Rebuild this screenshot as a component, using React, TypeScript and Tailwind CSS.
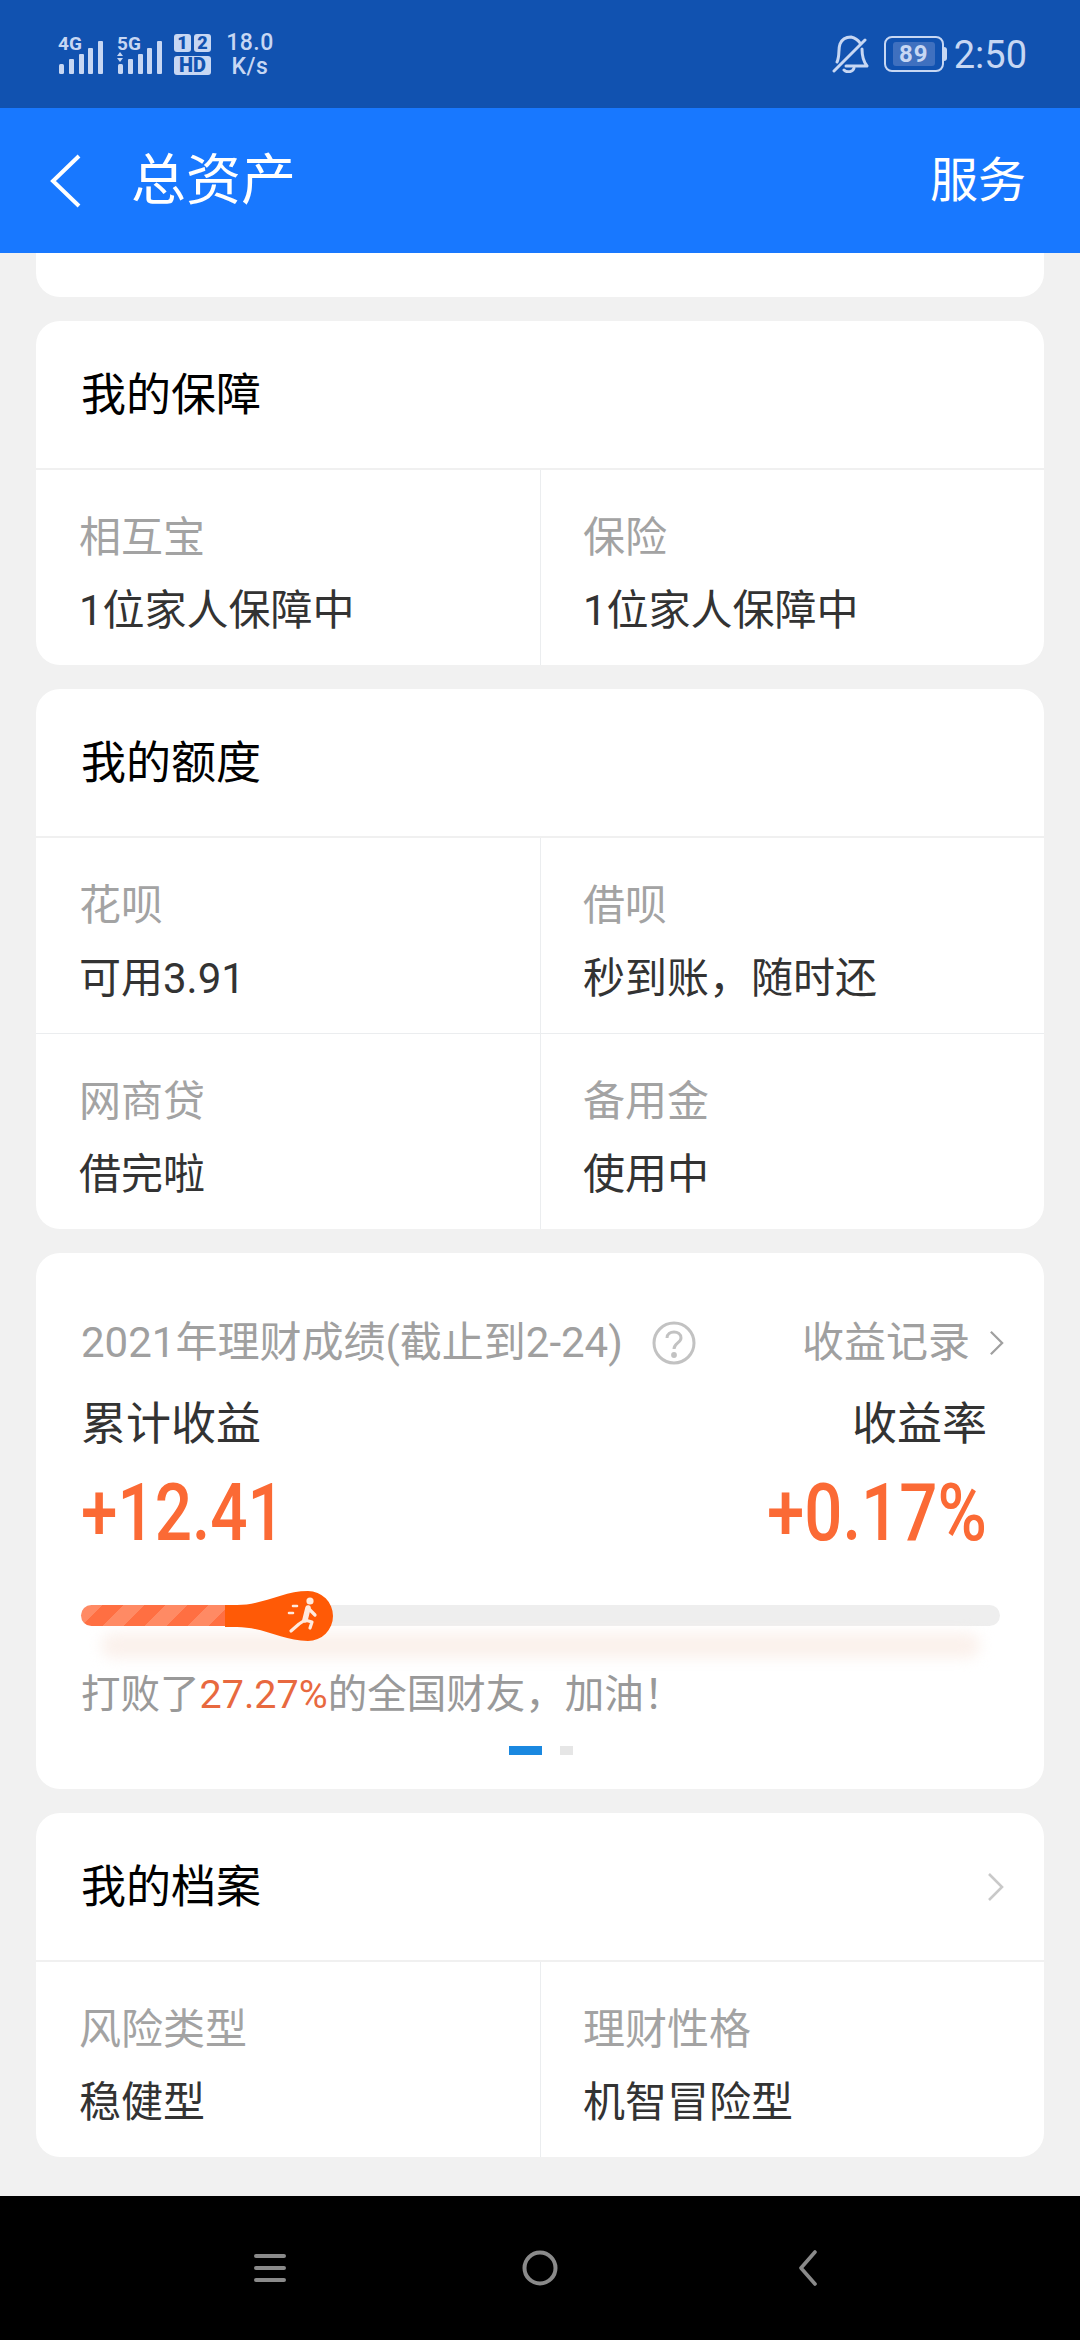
const font = "font-['Roboto','Noto_Sans_CJK_SC',sans-serif]";

function Cell({ label, value, first }: { label: string; value: string; first?: boolean }) {
  return (
    <div className={first ? "w-[505px] border-r border-[#ebedef] pb-[17px] pl-[43px] pt-[32px]" : "flex-1 pb-[17px] pl-[42px] pt-[32px]"}>
      <p className="h-[72px] text-[42px] leading-[72px] text-[#a3a3a3]">{label}</p>
      <p className="h-[74px] text-[42px] leading-[74px] text-[#333333]">{value}</p>
    </div>
  );
}

function CardHead({ title, arrow }: { title: string; arrow?: boolean }) {
  return (
    <div className="flex h-[149px] items-center justify-between border-b-2 border-[#f0f0f0] pl-[45px] pr-[40px]">
      <h2 className="pt-[3px] text-[45px] font-normal text-black">{title}</h2>
      {arrow && <Chevron className="h-[30px] w-[17px] stroke-[#c9c9c9]" />}
    </div>
  );
}

function Chevron({ className }: { className: string }) {
  return (
    <svg viewBox="0 0 17 30" className={className} fill="none" strokeWidth="2.6">
      <path d="M2 2 L15 15 L2 28" />
    </svg>
  );
}

function Signal({ label, arrows }: { label: string; arrows?: boolean }) {
  return (
    <div className="relative h-[41px] w-[46px]">
      <span className="absolute left-0 top-[1px] text-[19px] font-bold leading-[18px]">{label}</span>
      <svg width="46" height="41" viewBox="0 0 46 41" fill="#c7d7f3">
        {arrows && <path d="M3 18 l3 4 h-6 z M3 28 l-3 -4 h6 z" />}
        <rect x="1" y="30" width="5" height="10" rx="1.5" />
        <rect x="11" y="25" width="5" height="15" rx="1" />
        <rect x="21" y="20" width="5" height="20" rx="1" />
        <rect x="30" y="14" width="5" height="26" rx="1" />
        <rect x="40" y="7" width="5" height="33" rx="1" />
      </svg>
    </div>
  );
}

function StatusBar() {
  return (
    <div className="flex h-[108px] shrink-0 items-center justify-between bg-[#1152b0] pl-[58px] pr-[53px] text-[#c7d7f3]">
      <div className="flex items-center">
        <Signal label="4G" />
        <div className="ml-[13px]"><Signal label="5G" arrows /></div>
        <div className="ml-[11px] grid w-[37px] grid-cols-2 gap-x-[3px] gap-y-[4px] text-[#1152b0]">
          <span className="flex h-[18px] w-[17px] items-center justify-center rounded-[3px] bg-[#c7d7f3] text-[18px] font-black leading-none">1</span>
          <span className="flex h-[18px] w-[17px] items-center justify-center rounded-[3px] bg-[#c7d7f3] text-[18px] font-black leading-none">2</span>
          <span className="col-span-2 flex h-[19px] items-center justify-center rounded-[3px] bg-[#c7d7f3] text-[20px] font-black leading-none">HD</span>
        </div>
        <div className="ml-[14px] flex w-[50px] flex-col items-center pt-[2px] text-[23px] font-medium leading-[24px] tracking-[0.5px]">
          <span>18.0</span>
          <span>K/s</span>
        </div>
      </div>
      <div className="flex items-center">
        <svg width="38" height="38" viewBox="0 0 38 38" fill="none" stroke="#c7d7f3" strokeWidth="3" strokeLinecap="round" strokeLinejoin="round">
          <path d="M6 27 C9 21 7 14 9 9 C11 4 16 2 20 2 C24 3 27 5 29 8" />
          <path d="M31 14 C31 20 32 26 36 31 H15" />
          <path d="M34 5 L3 36" />
          <path d="M13 35 C16 38 22 37 23 33" />
        </svg>
        <div className="ml-[15px] flex h-[36px] w-[60px] items-center justify-center rounded-[8px] border-[2.5px] border-[#c7d7f3]">
          <span className="flex h-[24px] w-[42px] items-center justify-center rounded-[3px] bg-[#3f70bf] text-[24px] font-bold tracking-[1px]">89</span>
        </div>
        <div className="h-[14px] w-[3px] rounded-r-[3px] bg-[#c7d7f3]" />
        <span className="ml-[7px] pt-[2px] text-[38px] leading-none">2:50</span>
      </div>
    </div>
  );
}

function TitleBar() {
  return (
    <div className="flex h-[145px] shrink-0 items-center justify-between bg-[#1878ff] pl-[50px] pr-[54px] text-white">
      <div className="flex items-center">
        <svg width="31" height="54" viewBox="0 0 31 54" fill="none" stroke="white" strokeWidth="4">
          <path d="M29 2 L3 27 L29 52" />
        </svg>
        <span className="ml-[50px] text-[55px] leading-none">总资产</span>
      </div>
      <span className="text-[48px] leading-none">服务</span>
    </div>
  );
}

function Progress() {
  return (
    <div className="relative mr-[4px] mt-[47px] h-[21px] rounded-full bg-[#eeeeee]">
      <div className="absolute left-[20px] right-[20px] top-[28px] h-[25px] rounded-full bg-[#fbf1ec] blur-[7px]" />
      <div className="absolute left-0 top-0 h-[21px] w-[150px] rounded-l-full bg-[repeating-linear-gradient(135deg,#ff8a64_0,#ff8a64_15px,#ff6f42_15px,#ff6f42_30px)]" />
      <svg className="absolute left-[144px] top-[-15px]" width="110" height="52" viewBox="0 0 110 52">
        <path d="M0 15 H12 C38 15 58 1 83 1 A25 25 0 0 1 83 51 C58 51 38 37 12 37 H0 Z" fill="#ff5a06" />
        <circle cx="85" cy="11" r="3.6" fill="#ffeade" />
        <path d="M83 18 L80 30" stroke="#ffeade" strokeWidth="5.5" strokeLinecap="round" />
        <path d="M80 30 L74 34 L66 41 M80 30 L87 32 L85 38 M84 19 L90 25" fill="none" stroke="#ffeade" strokeWidth="3.2" strokeLinecap="round" strokeLinejoin="round" />
        <path d="M68 16 h4 M64 23 h4" stroke="#ffeade" strokeWidth="2.6" strokeLinecap="round" />
      </svg>
    </div>
  );
}

function Earnings() {
  return (
    <section className="rounded-[24px] bg-white pb-[34px] pl-[45px] pr-[40px] pt-[60px]">
      <div className="flex h-[60px] items-center text-[#a0a0a0]">
        <span className="text-[42px] leading-none">2021年理财成绩(截止到2-24)</span>
        <svg className="ml-[29px]" width="44" height="44" viewBox="0 0 44 44" fill="none" stroke="#c2c2c2" strokeWidth="3">
          <circle cx="22" cy="22" r="20" />
          <path d="M15 17 C15 9 29 9 29 17 C29 22 22 22 22 28" />
          <circle cx="22" cy="34" r="1.4" fill="#c2c2c2" />
        </svg>
        <span className="ml-auto text-[42px] leading-none">收益记录</span>
        <Chevron className="ml-[19px] h-[26px] w-[15px] stroke-[#a0a0a0]" />
      </div>
      <div className="mr-[17px] mt-[22px] flex h-[60px] items-center justify-between text-[45px] text-[#333333]">
        <span>累计收益</span>
        <span>收益率</span>
      </div>
      <div className="mr-[17px] mt-[13px] flex h-[90px] items-center justify-between text-[80px] font-medium leading-none text-[#fb6a35]">
        <span className="origin-left scale-x-[0.82]">+12.41</span>
        <span className="origin-right scale-x-[0.84]">+0.17%</span>
      </div>
      <Progress />
      <p className="mt-[39px] h-[60px] text-[39.5px] leading-[60px] text-[#999999]">
        打败了<span className="text-[#e8693f]">27.27%</span>{"的全国财友\uFF0C加油\uFF01"}
      </p>
      <div className="ml-[428px] mt-[21px] flex gap-[18px]">
        <span className="h-[9px] w-[33px] bg-[#1a88e0]" />
        <span className="h-[9px] w-[13px] bg-[#e6e6e6]" />
      </div>
    </section>
  );
}

export default function App() {
  return (
    <main className={`flex h-[2340px] w-[1080px] flex-col overflow-hidden bg-[#f1f1f1] ${font}`}>
      <StatusBar />
      <TitleBar />
      <div className="flex flex-1 flex-col gap-[24px] overflow-hidden px-[36px]">
        <div className="h-[44px] shrink-0 rounded-b-[24px] bg-white" />
        <section className="rounded-[24px] bg-white">
          <CardHead title="我的保障" />
          <div className="flex">
            <Cell first label="相互宝" value="1位家人保障中" />
            <Cell label="保险" value="1位家人保障中" />
          </div>
        </section>
        <section className="rounded-[24px] bg-white">
          <CardHead title="我的额度" />
          <div className="flex border-b border-[#ebedef]">
            <Cell first label="花呗" value="可用3.91" />
            <Cell label="借呗" value={"秒到账\uFF0C随时还"} />
          </div>
          <div className="flex">
            <Cell first label="网商贷" value="借完啦" />
            <Cell label="备用金" value="使用中" />
          </div>
        </section>
        <Earnings />
        <section className="rounded-[24px] bg-white">
          <CardHead title="我的档案" arrow />
          <div className="flex">
            <Cell first label="风险类型" value="稳健型" />
            <Cell label="理财性格" value="机智冒险型" />
          </div>
        </section>
      </div>
      <nav className="flex h-[144px] shrink-0 items-center bg-black pl-[254px] pr-[262px]">
        <svg width="32" height="30" viewBox="0 0 32 30" stroke="#8a8a8a" strokeWidth="4" strokeLinecap="round">
          <path d="M2 3 H30 M2 15 H30 M2 27 H30" />
        </svg>
        <svg className="ml-[236px]" width="36" height="36" viewBox="0 0 36 36" fill="none" stroke="#8a8a8a" strokeWidth="4">
          <circle cx="18" cy="18" r="15.5" />
        </svg>
        <svg className="ml-auto" width="20" height="36" viewBox="0 0 20 36" fill="none" stroke="#8a8a8a" strokeWidth="3.6" strokeLinecap="round" strokeLinejoin="round">
          <path d="M17 2 L3 18 L17 34" />
        </svg>
      </nav>
    </main>
  );
}
